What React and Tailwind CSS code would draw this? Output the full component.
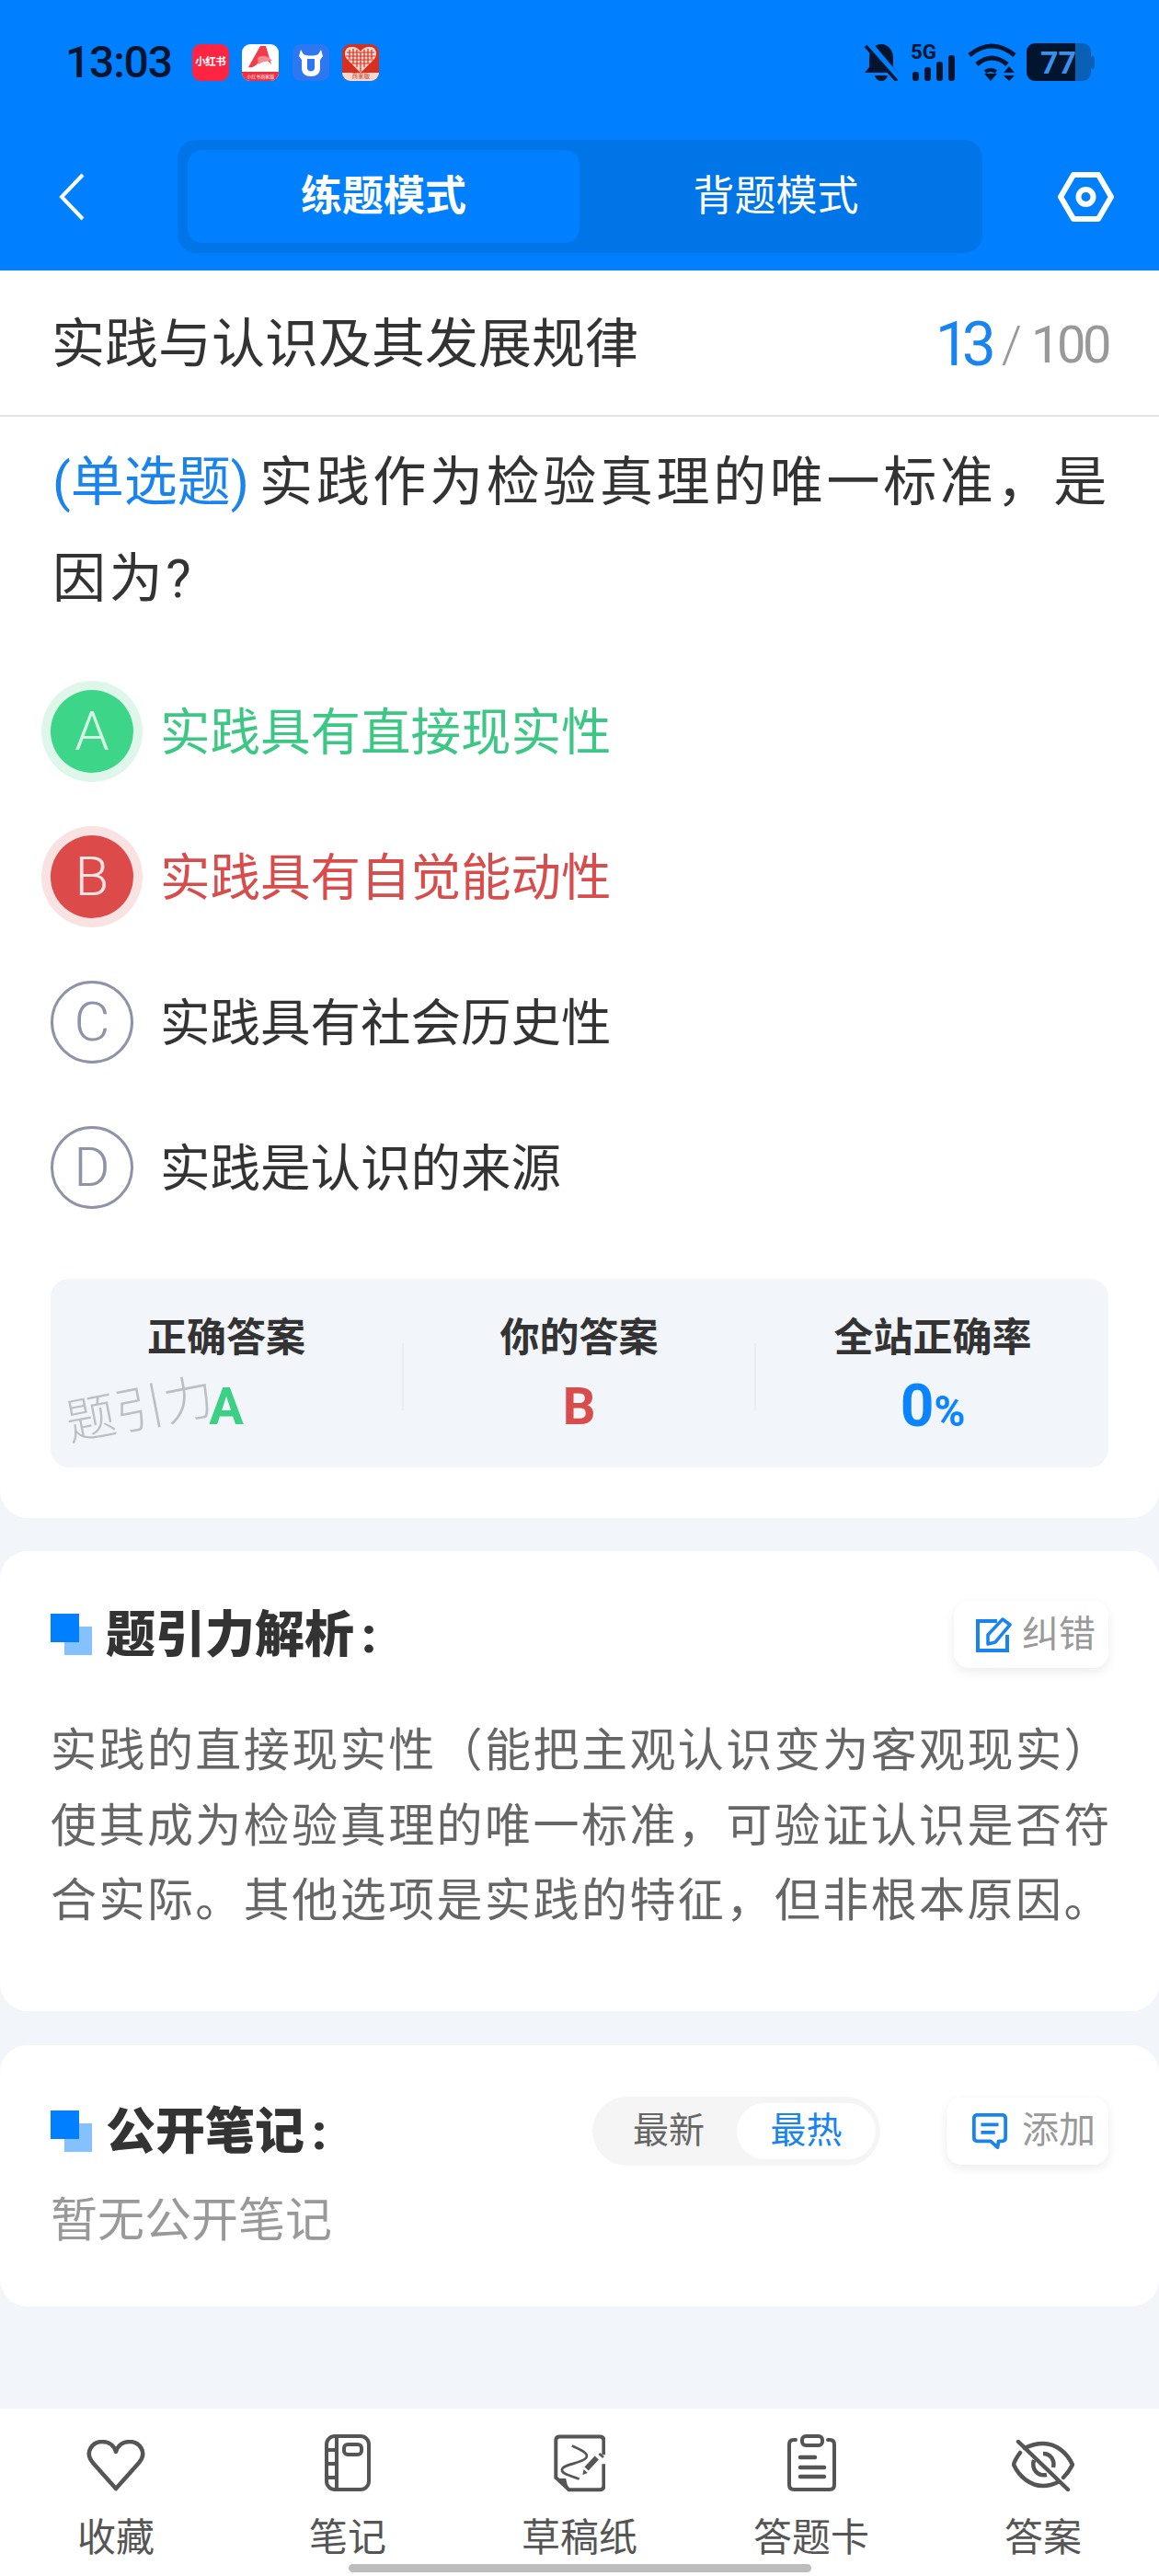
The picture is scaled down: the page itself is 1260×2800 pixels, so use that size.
import React from "react";

const DARK = "#02152e";

function AppIcons() {
  return (
    <div className="flex items-center gap-[14.5px] ml-[22px]">
      <div className="w-10 h-10 rounded-[9px] bg-[#ff2442] flex items-center justify-center text-white font-bold text-[11.5px] leading-none tracking-[-0.5px]">小红书</div>
      <div className="w-10 h-10 rounded-[9px] bg-white overflow-hidden flex flex-col">
        <svg viewBox="0 0 40 30" className="w-10 h-[30px]">
          <path d="M20 2 L26 2 L32 22 C26 15 22 15 18 20 C15 24 11 26 7 25 Z" fill="#f23b4b" />
          <path d="M17 15 C22 11 29 13 33 18 C28 18 22 19 18 22 Z" fill="#f58a92" />
        </svg>
        <div className="flex-1 bg-[#f0303f] text-white text-[5px] leading-[10px] text-center whitespace-nowrap">小红书商家版</div>
      </div>
      <div className="w-10 h-10 rounded-[9px] bg-[#2d78f0] flex items-center justify-center">
        <svg viewBox="0 0 40 40" className="w-10 h-10">
          <path d="M9 6 L12 11 C17 13 23 13 28 11 L31 6 L33 13 L30 17 V26 C30 32 26 35 20 35 C14 35 10 32 10 26 V17 L7 13 Z" fill="#fff" />
          <path d="M16 16 H24 V26 C24 28 22 29.5 20 29.5 C18 29.5 16 28 16 26 Z" fill="#2d78f0" />
        </svg>
      </div>
      <div className="w-10 h-10 rounded-[9px] bg-[#d8301f] overflow-hidden flex flex-col">
        <svg viewBox="0 0 40 31" className="w-10 h-[31px]">
          <path d="M20 31 L5 16 C1 11 3 3 10 3 C15 3 18 5 20 8 C22 5 25 3 30 3 C37 3 39 11 35 16 Z" fill="#f7d9d0" />
          <path d="M8 6 V16 M12 5 V21 M16 6 V25 M24 6 V25 M28 5 V21 M32 6 V16 M5 9 H35 M4 13 H36 M6 17 H34 M10 21 H30 M20 9 V30" stroke="#d8301f" strokeWidth="1.2" fill="none" />
        </svg>
        <div className="flex-1 bg-[#f9d8cf] text-[#c9351f] text-[6.5px] leading-[9px] text-center whitespace-nowrap">商家版</div>
      </div>
    </div>
  );
}

function StatusRight() {
  return (
    <div className="flex items-center">
      <svg viewBox="0 0 38 41" className="w-[38px] h-[41px]">
        <path d="M19 1 C11 1 6 8 6 16 V26 L1 32 H37 L32 26 V16 C32 8 27 1 19 1 Z" fill={DARK} />
        <path d="M12 35 H26 C25 39 22 41 19 41 C16 41 13 39 12 35 Z" fill={DARK} />
        <path d="M6 0 L38 38" stroke="#0080ff" strokeWidth="6" />
        <path d="M2 3 L36 41" stroke={DARK} strokeWidth="3.5" />
      </svg>
      <svg viewBox="0 0 50 41" className="w-[50px] h-[41px] ml-[13px]">
        <text x="0" y="17" fontSize="22" fontWeight="700" fill={DARK} fontFamily="Roboto, sans-serif" textLength="28" lengthAdjust="spacingAndGlyphs">5G</text>
        <rect x="2" y="31" width="7" height="10" rx="3" fill={DARK} />
        <rect x="15" y="26" width="7" height="15" rx="3" fill={DARK} />
        <rect x="28" y="20" width="7" height="21" rx="3" fill={DARK} />
        <rect x="41" y="13" width="7" height="28" rx="3" fill={DARK} />
      </svg>
      <svg viewBox="0 0 53 41" className="w-[53px] h-[41px] ml-[12px]">
        <path d="M2 13 Q26 -7 51 13" stroke={DARK} strokeWidth="5" fill="none" />
        <path d="M10 23 Q26 9 43 23" stroke={DARK} strokeWidth="5" fill="none" />
        <path d="M18 33 H32 L25 41 Z" fill={DARK} />
        <path d="M19 31 Q25 27 31 31" stroke={DARK} strokeWidth="4" fill="none" />
        <path d="M39 32 L45 25 L51 32 Z M39 35 H51 L45 41 Z" fill={DARK} />
      </svg>
      <svg viewBox="0 0 74 41" className="w-[74px] h-[41px] ml-[11px]">
        <rect x="40" y="0" width="30" height="41" rx="9" fill="#0a5fb6" />
        <rect x="70" y="14" width="4" height="14" rx="2" fill="#0a5fb6" />
        <path d="M9 0 H53 V41 H9 A9 9 0 0 1 0 32 V9 A9 9 0 0 1 9 0 Z" fill={DARK} />
        <text x="15" y="33" fontSize="34" fontWeight="700" fill="#3d8fe8" fontFamily="Roboto, sans-serif">77</text>
      </svg>
    </div>
  );
}

function Header() {
  return (
    <header className="bg-[#0080ff] h-[294px] shrink-0 pt-[47px]">
      <div className="flex items-center justify-between h-[41px] pl-[71px] pr-[70px]">
        <div className="flex items-center">
          <span className="text-[48px] leading-[41px] font-medium tracking-[-1.2px] text-[#02152e]">13:03</span>
          <AppIcons />
        </div>
        <StatusRight />
      </div>
      <div className="flex items-center mt-[64px] pl-[64px]">
        <svg viewBox="0 0 28 52" className="w-[28px] h-[52px] shrink-0">
          <path d="M26 2 L3 26 L26 50" stroke="#fff" strokeWidth="4" fill="none" />
        </svg>
        <div className="ml-[101px] w-[875px] h-[123px] p-[11px] rounded-[20px] bg-[#0075e8] flex items-center">
          <div className="w-[426px] h-[101px] rounded-[16px] bg-[#0080ff] flex items-center justify-center text-white font-bold text-[45px]">练题模式</div>
          <div className="flex-1 flex items-center justify-center text-white text-[45px]">背题模式</div>
        </div>
        <svg viewBox="0 0 61 54" className="w-[61px] h-[54px] ml-[82px] shrink-0">
          <path d="M3 27 L17 3 H44 L58 27 L44 51 H17 Z" stroke="#fff" strokeWidth="6" fill="none" strokeLinejoin="round" />
          <circle cx="30.5" cy="27" r="8" stroke="#fff" strokeWidth="6" fill="none" />
        </svg>
      </div>
    </header>
  );
}

const OPTIONS = [
  { l: "A", t: "实践具有直接现实性", kind: "ok" },
  { l: "B", t: "实践具有自觉能动性", kind: "bad" },
  { l: "C", t: "实践具有社会历史性" },
  { l: "D", t: "实践是认识的来源" },
];

function Option({ l, t, kind }) {
  const circle =
    kind === "ok"
      ? "bg-[#3dd688] text-[#d4f6e4] ring-[10px] ring-[#def7ea]"
      : kind === "bad"
      ? "bg-[#dc4a4a] text-[#fbe3e3] ring-[10px] ring-[#f9e2e2]"
      : "border-[3px] border-[#8f93a8] text-[#8f93a8]";
  const text = kind === "ok" ? "text-[#3cc884]" : kind === "bad" ? "text-[#d84c4c]" : "text-[#333333]";
  return (
    <div className="h-[158px] flex items-center pl-[55px]">
      <div className={`w-[90px] h-[90px] rounded-full flex items-center justify-center text-[60px] font-light shrink-0 ${circle}`}>{l}</div>
      <div className={`ml-[29px] pt-[3px] text-[54.5px] leading-none ${text}`}>{t}</div>
    </div>
  );
}

function Stat({ label, width, children }) {
  return (
    <div className={`shrink-0 flex flex-col items-center ${width}`}>
      <div className="text-[43px] leading-[50px] font-bold text-[#333333]">{label}</div>
      <div className="mt-[20px] h-[60px] leading-[60px] text-[56px] font-bold">{children}</div>
    </div>
  );
}

function SectionTitle({ children }) {
  return (
    <div className="flex items-center">
      <div className="relative w-[45px] h-[45px] shrink-0">
        <div className="absolute left-[15px] top-[14px] w-[30px] h-[31px] bg-[#85c1ff]" />
        <div className="absolute left-0 top-0 w-[31px] h-[31px] bg-[#0080ff]" />
      </div>
      <div className="ml-[15px] pt-[3px] text-[54px] leading-none font-black text-[#333333]">
        {children}
        <span className="ml-[8px]">:</span>
      </div>
    </div>
  );
}

function Btn({ icon, label, pad, gap }) {
  return (
    <div className={`h-[73px] rounded-[16px] bg-white shadow-[0_4px_12px_rgba(0,0,0,0.08)] flex items-center pr-[14px] ${pad}`}>
      {icon}
      <span className={`text-[40px] leading-none text-[#999999] ${gap}`}>{label}</span>
    </div>
  );
}

const PencilIcon = (
  <svg viewBox="0 0 40 40" className="w-[40px] h-[40px]">
    <path d="M24 5 H3 V37 H35 V20" stroke="#1a84ee" strokeWidth="4" fill="none" />
    <path d="M14 20 L30 3 L38 9 L22 28 L14 30 Z" stroke="#1a84ee" strokeWidth="3.5" fill="none" strokeLinejoin="round" />
  </svg>
);

const CommentIcon = (
  <svg viewBox="0 0 42 42" className="w-[40px] h-[40px]">
    <path d="M7 3 H35 Q39 3 39 7 V29 Q39 33 35 33 H31 L30 40 L22 33 H7 Q3 33 3 29 V7 Q3 3 7 3 Z" stroke="#1a84ee" strokeWidth="4" fill="none" strokeLinejoin="round" />
    <path d="M11 14 H31 M11 23 H27" stroke="#1a84ee" strokeWidth="4" />
  </svg>
);

const NavIcons = {
  heart: (
    <svg viewBox="0 0 64 56" className="w-[64px] h-[56px] mt-[6px]">
      <path d="M32 53 L7 25 C-3 13 7 2 17 2 C24 2 30 6 32 13 C34 6 40 2 47 2 C57 2 67 13 57 25 Z" stroke="#555555" strokeWidth="4.5" fill="none" strokeLinejoin="round" />
    </svg>
  ),
  book: (
    <svg viewBox="0 0 50 62" className="w-[50px] h-[62px]">
      <rect x="2" y="2" width="46" height="58" rx="9" stroke="#555555" strokeWidth="4" fill="none" />
      <path d="M13 2 V60 M2 17 H13 M2 32 H13 M2 47 H13" stroke="#555555" strokeWidth="4" />
      <rect x="21" y="11" width="19" height="11" rx="4" stroke="#555555" strokeWidth="4" fill="none" />
    </svg>
  ),
  draft: (
    <svg viewBox="68 53 170 190" className="w-[56px] h-[63px]">
      <path d="M233 120 V72 Q233 60 220 60 H88 Q75 60 75 72 V195 L118 235 H220 Q233 235 233 222 V150" stroke="#555555" strokeWidth="12" fill="none" />
      <path d="M75 198 L108 198 Q110 215 120 235 Z" fill="#555555" />
      <path d="M128 90 C160 105 185 115 175 130 C160 150 95 150 95 170 C95 185 130 190 152 200" stroke="#555555" strokeWidth="8" fill="none" />
      <path d="M176 166 L210 130" stroke="#555555" strokeWidth="18" />
      <path d="M163 186 L167 168 L180 180 Z" fill="#555555" />
      <path d="M218 116 L232 128" stroke="#555555" strokeWidth="8" />
    </svg>
  ),
  card: (
    <svg viewBox="0 0 53 62" className="w-[53px] h-[62px]">
      <path d="M9 6 H7 Q2 6 2 11 V55 Q2 60 7 60 H46 Q51 60 51 55 V11 Q51 6 46 6 H44" stroke="#555555" strokeWidth="4" fill="none" strokeLinecap="round" />
      <rect x="16" y="2" width="22" height="10" rx="4" stroke="#555555" strokeWidth="4" fill="none" />
      <path d="M14 25 H30 M14 36 H40 M14 46 H40" stroke="#555555" strokeWidth="4.5" strokeLinecap="round" />
    </svg>
  ),
  eye: (
    <svg viewBox="0 0 68 56" className="w-[68px] h-[56px] mt-[6px]">
      <path d="M14 9 Q24 4 34 4 C48 4 60 14 66 27 C63 33 60 37 56 41" stroke="#555555" strokeWidth="4.5" fill="none" strokeLinecap="round" />
      <path d="M9 14 C6 18 3 22 2 27 C8 40 20 50 34 50 C40 50 46 48 50 46" stroke="#555555" strokeWidth="4.5" fill="none" strokeLinecap="round" />
      <path d="M34 15 C42 15 47 22 45 30" stroke="#555555" strokeWidth="4.5" fill="none" />
      <path d="M24 22 C21 32 28 40 38 38" stroke="#555555" strokeWidth="4.5" fill="none" />
      <path d="M7 2 L61 54" stroke="#555555" strokeWidth="4.5" strokeLinecap="round" />
    </svg>
  ),
};

const NAV = [
  { i: "heart", t: "收藏" },
  { i: "book", t: "笔记" },
  { i: "draft", t: "草稿纸" },
  { i: "card", t: "答题卡" },
  { i: "eye", t: "答案" },
];

export default function App() {
  return (
    <div className="w-[1260px] h-[2800px] flex flex-col bg-[#f2f5f9] overflow-hidden [font-family:Roboto,'Noto_Sans_CJK_SC',sans-serif]">
      <Header />
      <main className="flex-1 flex flex-col">
        <section className="bg-white rounded-b-[30px] pb-[55px]">
          <div className="h-[159px] border-b-2 border-[#e5e5e5] flex items-center justify-between pl-[56px] pr-[55px]">
            <div className="text-[58px] leading-none pt-[2px] text-[#333333]">实践与认识及其发展规律</div>
            <div className="flex items-center pt-[4px]">
              <span className="text-[66px] leading-none font-normal tracking-[-8px] text-[#1a84ee]">13</span>
              <span className="ml-[14px] text-[56px] leading-none font-light text-[#999999]">/</span>
              <span className="ml-[10px] text-[56px] leading-none font-normal tracking-[-3.5px] text-[#999999]">100</span>
            </div>
          </div>
          <div className="pt-[19px] px-[57px] text-[58px] leading-[105px] text-[#333333] tracking-[3.65px] whitespace-nowrap">
            <span className="text-[58px] text-[#1a84ee] tracking-normal mr-[11px]">(单选题)</span>
            实践作为检验真理的唯一标准，是
            <br />
            因为?
          </div>
          <div className="mt-[34px] flex flex-col">
            {OPTIONS.map((o) => (
              <Option key={o.l} {...o} />
            ))}
          </div>
          <div className="relative mt-[42px] mx-[55px] h-[205px] rounded-[20px] bg-[#f2f5f9] flex items-center pt-[2px]">
            <Stat label="正确答案" width="w-[382px]"><span className="text-[#3cd084]">A</span></Stat>
            <div className="w-[2px] h-[73px] bg-[#e9ecf0] mt-[6px] shrink-0" />
            <Stat label="你的答案" width="w-[381px]"><span className="text-[#d84c4c]">B</span></Stat>
            <div className="w-[2px] h-[73px] bg-[#e9ecf0] mt-[6px] shrink-0" />
            <Stat label="全站正确率" width="w-[384px]"><span className="text-[64px] text-[#0a84ff]">0<span className="text-[46px]">%</span></span></Stat>
            <div className="absolute left-[16px] top-[116px] text-[54px] leading-none font-light text-[#bcbfc3] -rotate-[11deg] whitespace-nowrap">题引力</div>
          </div>
        </section>

        <section className="mt-[36px] bg-white rounded-[30px] pt-[54px] pb-[78px] px-[55px]">
          <div className="flex items-center justify-between">
            <SectionTitle>题引力解析</SectionTitle>
            <Btn icon={PencilIcon} label="纠错" pad="pl-[23px]" gap="ml-[11px]" />
          </div>
          <div className="mt-[50px] text-[50px] leading-[81.5px] tracking-[2.45px] text-[#666666] whitespace-nowrap">
            实践的直接现实性（能把主观认识变为客观现实）
            <br />
            使其成为检验真理的唯一标准，可验证认识是否符
            <br />
            合实际。其他选项是实践的特征，但非根本原因。
          </div>
        </section>

        <section className="mt-[37px] bg-white rounded-[30px] pt-[56px] pb-[58px] px-[55px]">
          <div className="flex items-center justify-between h-[75px]">
            <SectionTitle>公开笔记</SectionTitle>
            <div className="flex items-center ml-auto">
              <div className="w-[313px] h-[75px] rounded-full bg-[#f5f5f5] flex items-center pl-[44px] pr-[5px]">
                <span className="text-[39px] text-[#666666]">最新</span>
                <span className="ml-auto w-[151px] h-[61px] rounded-full bg-white flex items-center justify-center text-[39px] text-[#1a84ee]">最热</span>
              </div>
              <div className="ml-[72px]">
                <Btn icon={CommentIcon} label="添加" pad="pl-[27px]" gap="ml-[15px]" />
              </div>
            </div>
          </div>
          <div className="mt-[25px] text-[51px] leading-[70px] text-[#999999]">暂无公开笔记</div>
        </section>
      </main>
      <nav className="bg-white h-[182px] shrink-0 flex flex-col">
        <div className="flex pt-[26px]">
          {NAV.map((n) => (
            <div key={n.i} className="flex-1 flex flex-col items-center">
              <div className="h-[66px] flex items-center justify-center">{NavIcons[n.i]}</div>
              <div className="mt-[27px] text-[42px] leading-[44px] text-[#555555]">{n.t}</div>
            </div>
          ))}
        </div>
        <div className="mt-[6px] mx-auto w-[503px] h-[9px] rounded-full bg-[#bdbdbd]" />
      </nav>
    </div>
  );
}
